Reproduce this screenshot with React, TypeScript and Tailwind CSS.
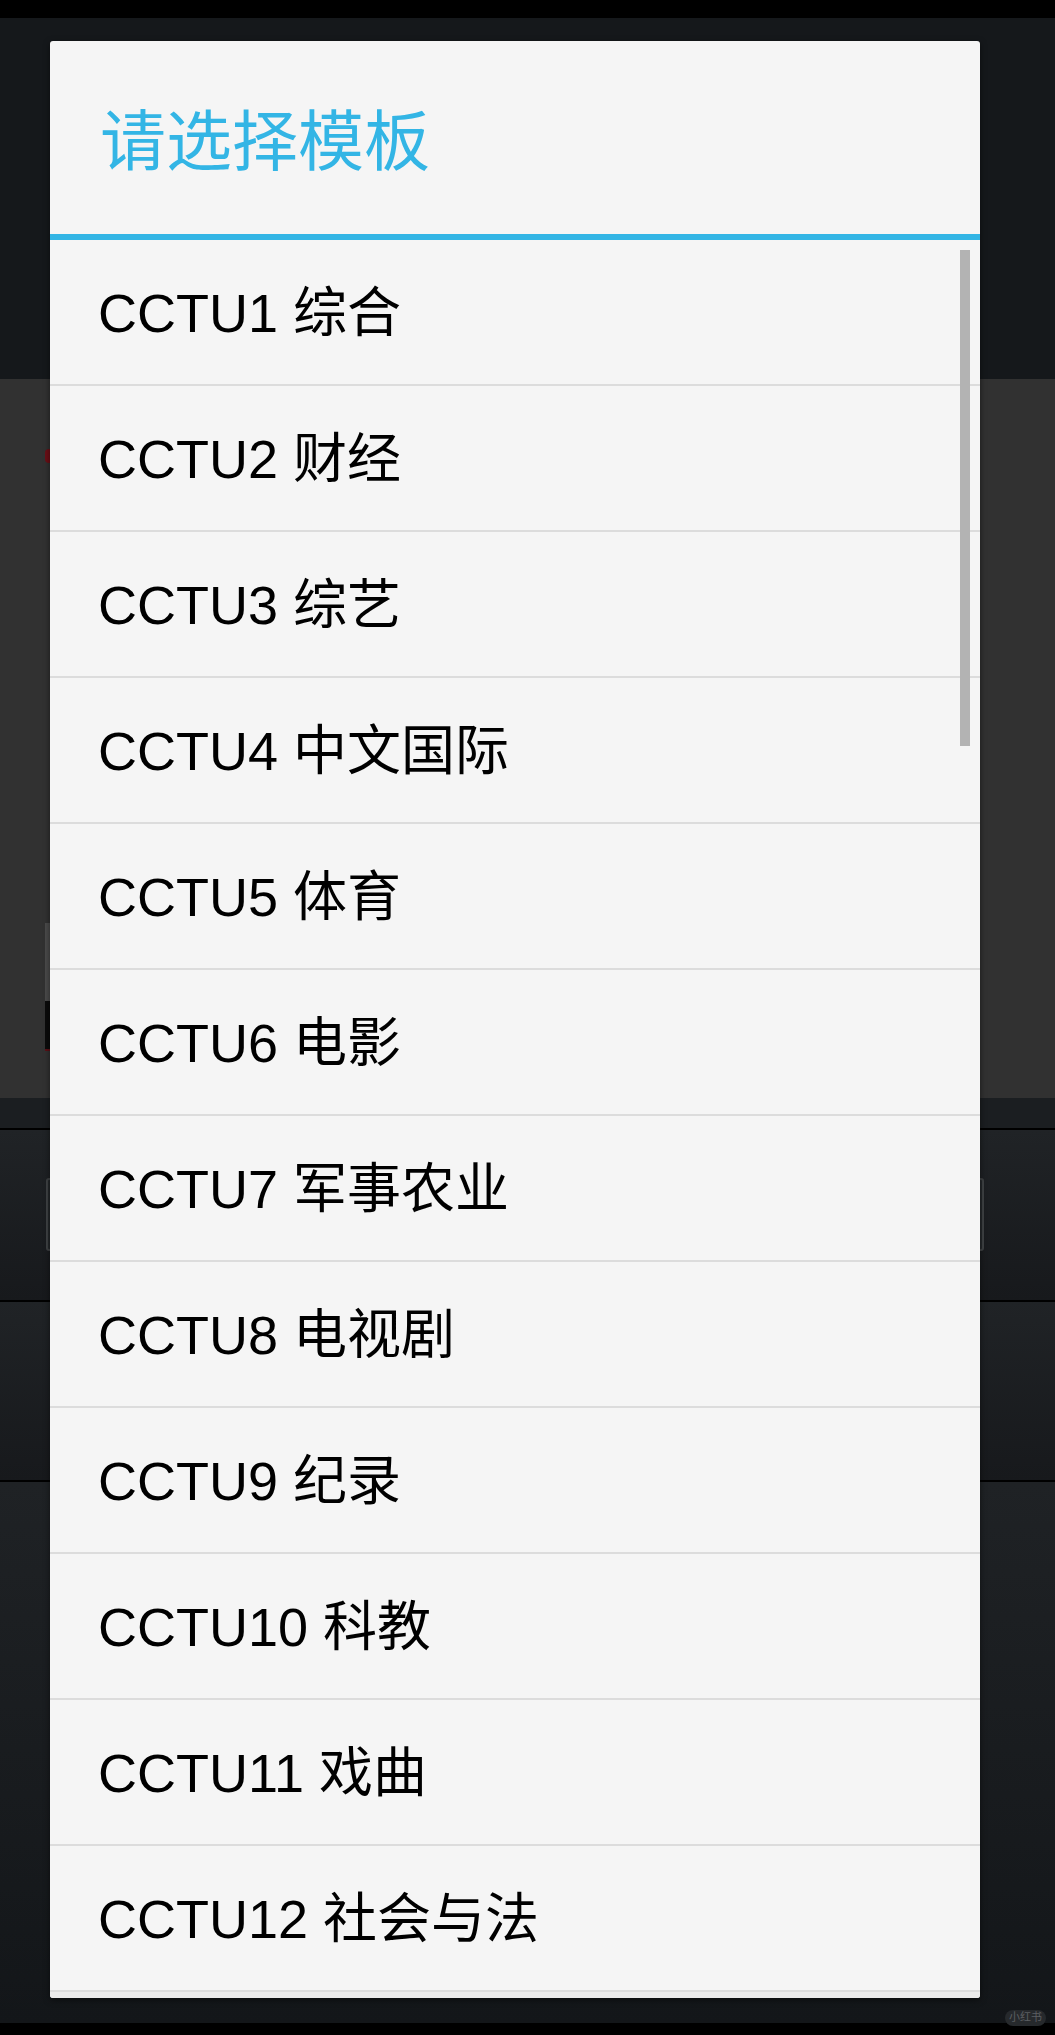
const channels = [
  "CCTU1 综合",
  "CCTU2 财经",
  "CCTU3 综艺",
  "CCTU4 中文国际",
  "CCTU5 体育",
  "CCTU6 电影",
  "CCTU7 军事农业",
  "CCTU8 电视剧",
  "CCTU9 纪录",
  "CCTU10 科教",
  "CCTU11 戏曲",
  "CCTU12 社会与法",
];

function Backdrop() {
  return (
    <div className="flex flex-col h-full">
      <div className="h-[18px] bg-black" />
      <div className="h-[361px] bg-[#15181b]" />
      {/* dimmed content area behind the dialog */}
      <div className="h-[719px] bg-[#313131] flex flex-col pl-[45px]">
        <div className="mt-[70px] w-[8px] h-[14px] rounded-full bg-[#6b0f16]" />
        <div className="mt-[460px] w-[6px] h-[78px] bg-[#4a4a4a]" />
        <div className="w-[6px] h-[50px] bg-[#0b0b0b] border-b-2 border-[#5a1016]" />
      </div>
      <div className="h-[30px] bg-[#1b1e21]" />
      <div className="h-[172px] border-t-2 border-black bg-gradient-to-b from-[#202326] to-[#17191c] pl-[46px] pr-[71px] pt-[48px]">
        <div className="h-[73px] rounded-[3px] border-2 border-[#3f4244] bg-[#25282b]" />
      </div>
      <div className="h-[180px] border-t-2 border-black bg-gradient-to-b from-[#202326] to-[#17191c]" />
      <div className="flex-1 border-t-2 border-black bg-gradient-to-b from-[#1f2225] to-[#131619]" />
      <div className="h-[12px] bg-black" />
    </div>
  );
}

export default function App() {
  return (
    <div className="relative w-[1055px] h-[2035px] overflow-hidden bg-[#15181b] font-['Liberation_Sans','Noto_Sans_CJK_SC',sans-serif]">
      <Backdrop />

      <div className="absolute left-[50px] top-[41px] w-[930px] rounded-[3px] bg-[#f5f5f5] shadow-[0_2px_6px_rgba(0,0,0,0.5)] overflow-hidden">
        <div className="h-[193px] flex items-center pl-[50px] pt-[8px]">
          <span className="text-[66px] leading-none text-[#33b5e5]">请选择模板</span>
        </div>
        <div className="h-[6px] bg-[#33b5e5]" />

        <div className="relative">
          {channels.map((c) => (
            <div key={c} className="h-[146px] flex items-center pl-[48px] pt-[2px] border-b-2 border-[#dcdcdc]">
              <span className="text-[54px] leading-none text-black">{c}</span>
            </div>
          ))}
          <div className="absolute right-[10px] top-[10px] w-[10px] h-[496px] bg-[#b3b3b3]" />
        </div>
        <div className="h-[6px] bg-[#ebebeb]" />
      </div>

      <div className="absolute right-[9px] bottom-[9px] rounded-full bg-[#26292c] px-[4px] py-[1px] text-[11px] leading-tight text-[#5c5f62]">
        小红书
      </div>
    </div>
  );
}
